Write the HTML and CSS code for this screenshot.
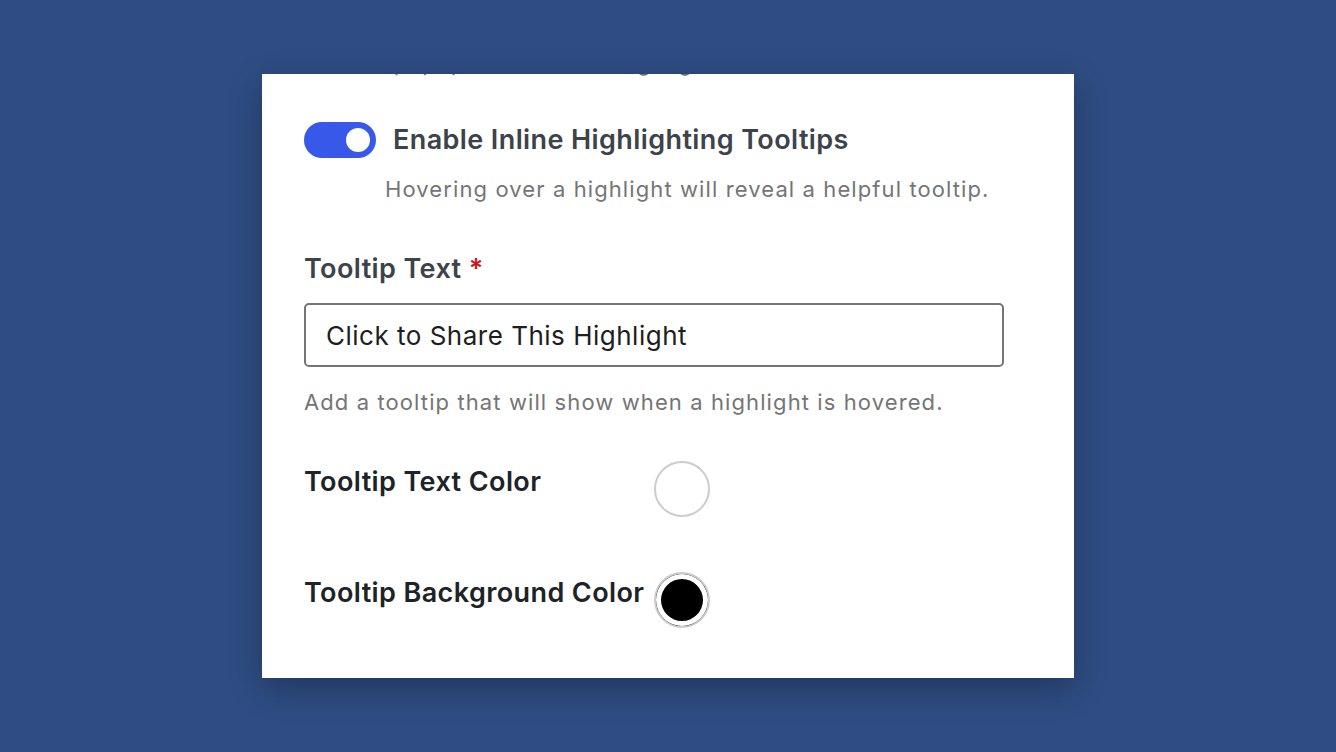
FILE: index.html
```html
<!DOCTYPE html>
<html lang="en">
<head>
  <meta charset="UTF-8" />
  <meta name="viewport" content="width=device-width, initial-scale=1" />
  <title>Highlight Settings</title>
  <link rel="stylesheet" href="styles.css">
</head>
<body>
  <div class="page">
    <div class="panel">
      <p class="clipped">Show a popup when text is highlighted.</p>

      <div class="toggle-row">
        <span class="toggle on"><span class="knob"></span></span>
        <span class="toggle-title">Enable Inline Highlighting Tooltips</span>
      </div>
      <p class="toggle-help">Hovering over a highlight will reveal a helpful tooltip.</p>

      <div class="field">
        <label class="field-label" for="tooltip-text">Tooltip Text <span class="required">*</span></label>
        <input type="text" id="tooltip-text" value="Click to Share This Highlight">
        <p class="help">Add a tooltip that will show when a highlight is hovered.</p>
      </div>

      <div class="color-row">
        <span class="color-label">Tooltip Text Color</span>
        <span class="swatch white"></span>
      </div>
      <div class="color-row">
        <span class="color-label">Tooltip Background Color</span>
        <span class="swatch black"></span>
      </div>
    </div>
  </div>
</body>
</html>
```

FILE: styles.css
```css
* {
  box-sizing: border-box;
  margin: 0;
  padding: 0;
}
body {
  font-family: Inter, 'Noto Sans', sans-serif;
  background-color: #2f4d84;
  height: 100vh;
  overflow: hidden;
}
.page {
  padding-top: 74px;
}
.panel {
  width: 812px;
  height: 604px;
  margin: 0 auto;
  background: #fff;
  box-shadow: 0 10px 30px rgba(0,0,0,0.3);
  overflow: hidden;
  padding: 0 42px;
}
/* previous setting's help text, scrolled mostly out of view */
.clipped {
  font-size: 22px;
  line-height: 30px;
  letter-spacing: 1px;
  color: #757575;
  margin-top: -26px;
}
.toggle-row {
  display: flex;
  align-items: center;
  gap: 17px;
  margin-top: 44px;
}
.toggle {
  width: 72px;
  height: 36px;
  border-radius: 18px;
  background: #3858e9;
  display: flex;
  align-items: center;
  justify-content: flex-end;
  padding-right: 6px;
  flex-shrink: 0;
}
.knob {
  width: 24px;
  height: 24px;
  border-radius: 50%;
  background: #fff;
}
.toggle-title {
  font-size: 27px;
  font-weight: 600;
  letter-spacing: 0.4px;
  color: #3c434a;
  line-height: 34px;
}
.toggle-help {
  font-size: 22px;
  line-height: 30px;
  letter-spacing: 1.1px;
  color: #757575;
  margin: 16px 0 0 81px;
}
.field {
  margin-top: 48px;
}
.field-label {
  display: block;
  font-size: 27px;
  font-weight: 600;
  letter-spacing: 0.4px;
  color: #3c434a;
  line-height: 34px;
}
.required {
  color: #cc1818;
}
.field input {
  display: block;
  width: 700px;
  height: 64px;
  margin-top: 17px;
  border: 2px solid #757575;
  border-radius: 5px;
  padding: 0 20px;
  font-family: inherit;
  font-size: 26px;
  letter-spacing: 0.5px;
  color: #1e1e1e;
  outline: none;
}
.help {
  font-size: 22px;
  line-height: 30px;
  letter-spacing: 1.1px;
  color: #757575;
  margin-top: 20px;
}
.color-row {
  display: flex;
  align-items: flex-start;
  margin-top: 44px;
}
.color-row + .color-row {
  margin-top: 55px;
}
.color-label {
  width: 350px;
  font-size: 27px;
  font-weight: 600;
  letter-spacing: 0.4px;
  color: #1d2327;
  line-height: 34px;
  padding-top: 4px;
}
.swatch {
  width: 56px;
  height: 56px;
  border-radius: 50%;
  border: 2px solid #cccccc;
  background: #fff;
}
.swatch.black {
  background: #000;
  box-shadow: inset 0 0 0 5px #fff;
}
```
